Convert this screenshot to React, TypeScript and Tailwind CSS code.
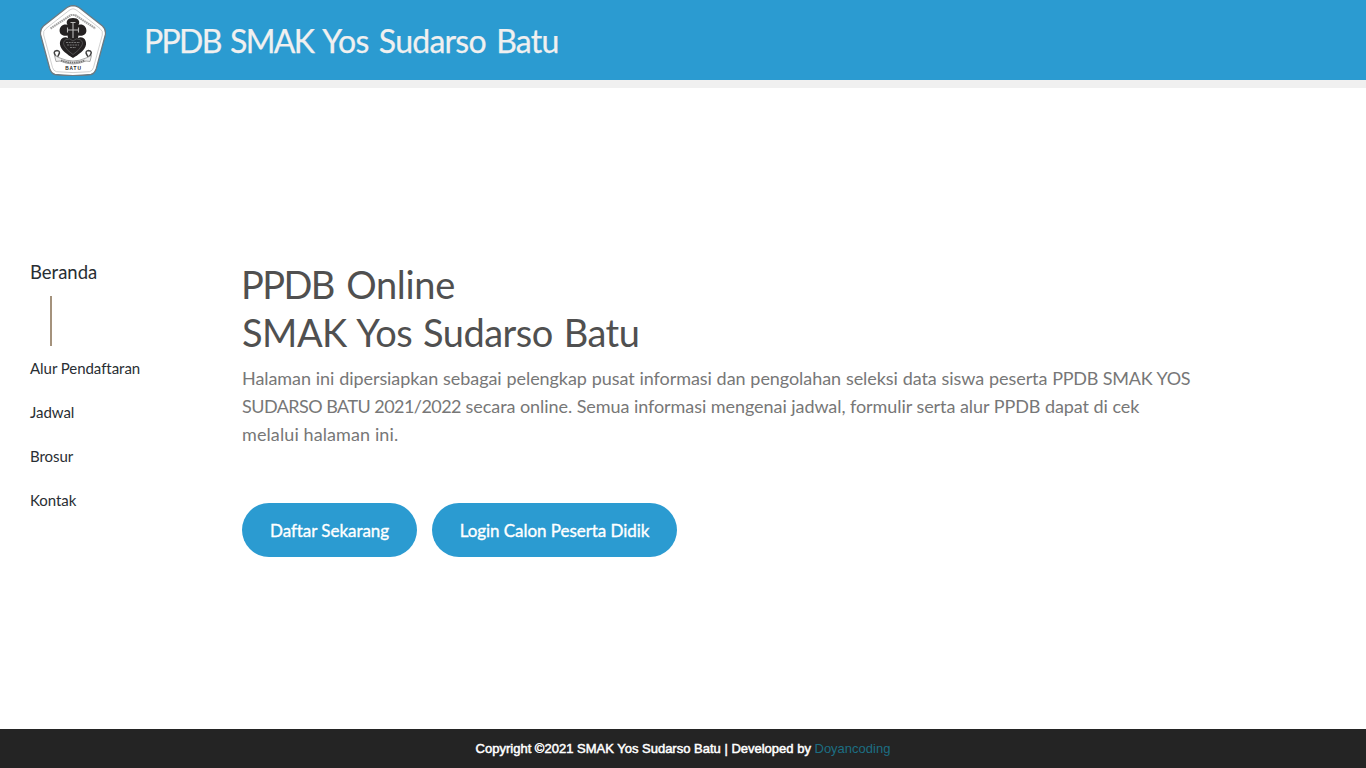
const links = ['Alur Pendaftaran', 'Jadwal', 'Brosur', 'Kontak'];

function Crest() {
  return (
    <svg width="66" height="71" viewBox="0 0 66 71" fill="none" role="img" aria-label="SMAK Yos Sudarso Batu">
      <path d="M33 .5Q36 .6 39 2.500L62.500 21Q66.400 24.500 65.300 30L56.300 63.500Q54.800 68.500 51 69.500Q33 71.700 15 69.500Q11.200 68.500 9.700 63.500L.7 30Q-.4 24.500 3.500 21L27 2.500Q30 .6 33 .5Z" fill="#fff" stroke="#6b7a82" strokeWidth="1.300" />
      <path d="M33 3.800Q35 4 37 5.500L60 23.500Q63.300 26 62.300 30L53.500 62.500Q52.500 66 49.500 66.700Q33 68.500 16.500 66.700Q13.500 66 12.500 62.500L3.700 30Q2.700 26 6 23.500L29 5.500Q31 4 33 3.800Z" stroke="#bdbdbd" strokeWidth=".7" />
      <path d="M10.500 23.500L31 10H35L55.500 23.500" stroke="#a6a6a6" strokeWidth="2.200" strokeDasharray="1.700 .5" />
      <path d="M33 13C38.500 13 40.500 16.500 38.500 20C42.500 18.500 46.600 21.500 46.400 26C46.200 30 42 31.500 38.500 30.500L38 33C42 30.500 46.800 34 46 39.500C45.500 45 38 50 33 53C28 50 20.500 45 20 39.500C19.200 34 24 30.500 28 33L27.500 30.500C24 31.500 19.800 30 19.600 26C19.400 21.500 23.500 18.500 27.500 20C25.500 16.500 27.500 13 33 13Z" fill="#242122" />
      <path d="M33 17V33M27 25H39M30.500 17.500H35.500M27.500 22.500V27.500M38.500 22.500V27.500" stroke="#b9b9b9" strokeWidth="1.100" />
      <path d="M33 36Q36 32.500 40 34.500Q44 37 41.500 41Q38.500 46 33 49.500Q27.500 46 24.500 41Q22 37 26 34.500Q30 32.500 33 36Z" stroke="#5e5e5e" strokeWidth=".7" />
      <path d="M26 37.500H40M27 40H39M30 42.500H36" stroke="#757575" strokeWidth="1" strokeDasharray="2 .7" />
      <path d="M16 51.500Q12 46 17 45.500Q21 46 18.500 50L17 53M49.500 51.500Q53.500 46 48.500 45.500Q44.500 46 47 50L49 53" stroke="#404040" strokeWidth="1.500" />
      <path d="M14.500 50.500L20 53Q33 59 46 53L51.500 50.500L50 56.500L46 56Q33 62 20 56L16 56.500Z" fill="#eee" stroke="#888" strokeWidth=".7" />
      <path d="M21 55.300Q33 59.800 45 55.300" stroke="#777" strokeWidth="1.800" strokeDasharray="1.600 .6" />
      <text x="33.500" y="64.500" textAnchor="middle" fill="#222" fontFamily="Liberation Sans, sans-serif" fontSize="4.800" fontWeight="700" letterSpacing=".9">BATU</text>
    </svg>
  );
}

export default function App() {
  return (
    <div className="flex h-screen flex-col overflow-hidden bg-white font-['Lato',sans-serif]">
      <header className="flex h-[88px] shrink-0 items-center border-b-8 border-[#f0f0f0] bg-[#2b9bd1] pl-10">
        <Crest />
        <h1 className="ml-[38px] whitespace-nowrap pt-0.5 text-[32px] leading-10 tracking-[-0.75px] text-[#f0f0f0] [word-spacing:2.9px] [-webkit-text-stroke:0.25px]">
          <span className="tracking-[-1.7px]">PPDB SMAK</span> Yos Sudarso Batu
        </h1>
      </header>

      <main className="flex grow items-start">
        <nav className="flex w-[242px] shrink-0 flex-col items-start pt-[172px] pl-[30px] text-[15px] text-[#292e33]">
          <a href="#beranda" className="text-[18.5px] leading-6">Beranda</a>
          <div className="mt-3 mb-2.5 ml-5 h-[50px] w-0.5 bg-[#a4927c]" />
          <div className="flex flex-col items-start gap-5">
            {links.map((link) => (
              <a key={link} href="#" className="leading-6 tracking-[-0.05px] whitespace-nowrap">{link}</a>
            ))}
          </div>
        </nav>

        <section className="pt-[172px]">
          <h2 className="flex flex-col items-start whitespace-nowrap text-[38px] leading-[48px] text-[#505050]">
            <span className="-ml-px tracking-[-0.3px] [word-spacing:3px]"><span className="tracking-[-1.6px]">PPDB</span> Online</span>
            <span className="tracking-[-0.5px] [word-spacing:1.6px]">SMAK Yos Sudarso Batu</span>
          </h2>
          <p className="mt-2 flex flex-col items-start whitespace-nowrap text-[18px] leading-7 text-[#777]">
            <span className="tracking-[-0.06px] [word-spacing:0.3px]">
              Halaman ini dipersiapkan sebagai pelengkap pusat informasi dan pengolahan seleksi data siswa peserta <span className="tracking-[-0.25px]">PPDB SMAK YOS</span>
            </span>
            <span className="tracking-[-0.06px]">
              <span className="tracking-[-0.55px]">SUDARSO BATU 2021/2022</span> secara online. Semua informasi mengenai jadwal, formulir serta alur PPDB dapat di cek
            </span>
            <span className="tracking-[0.1px]">melalui halaman ini.</span>
          </p>
          <div className="mt-[55px] flex gap-[15px] text-[17px] tracking-[-0.05px] text-white [-webkit-text-stroke:0.35px]">
            <a href="#daftar" className="flex h-[54px] w-[175px] items-center justify-center whitespace-nowrap rounded-full bg-[#2b9bd1] pt-0.5">Daftar Sekarang</a>
            <a href="#login" className="flex h-[54px] w-[245px] items-center justify-center whitespace-nowrap rounded-full bg-[#2b9bd1] pt-0.5">Login Calon Peserta Didik</a>
          </div>
        </section>
      </main>

      <footer className="flex h-[39px] shrink-0 items-center justify-center whitespace-pre bg-[#242424] font-['Liberation_Sans',sans-serif] text-[13px] text-white">
        <span className="[-webkit-text-stroke:0.5px]">Copyright ©2021 SMAK Yos Sudarso Batu | Developed by </span>
        <a href="#" className="text-[#1c6e82]">Doyancoding</a>
      </footer>
    </div>
  );
}
